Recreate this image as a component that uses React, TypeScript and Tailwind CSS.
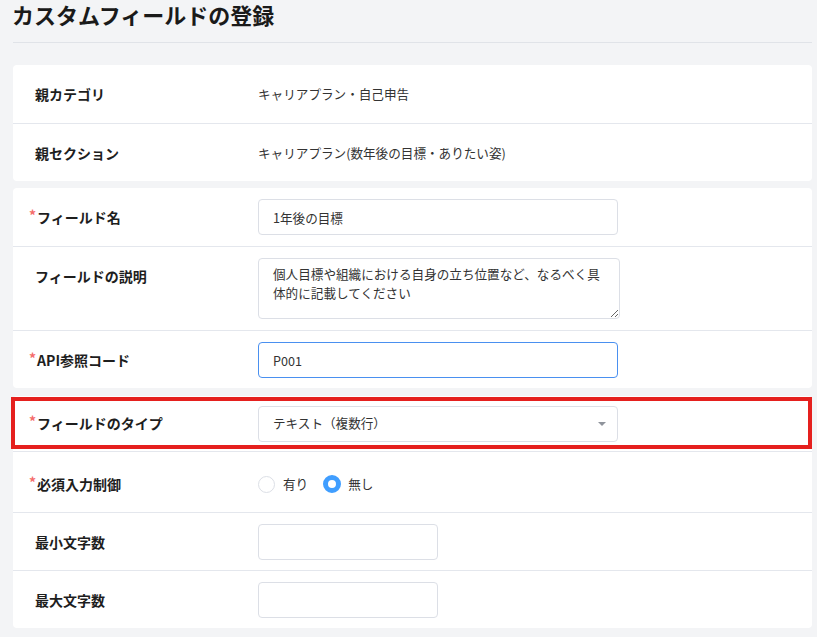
import React from "react";

const font = { fontFamily: '"Noto Sans CJK JP", "Noto Sans", sans-serif' };

function Label({ text, required }: { text: string; required?: boolean }) {
  return (
    <div className="w-[245px] shrink-0 h-9 flex items-center">
      {required ? (
        <span className="pl-[16px] flex items-center text-[14px] font-bold text-[#1e1e1e]">
          <span className="text-[#f56c6c] text-[14px] leading-[14px] font-bold -mt-[5px] mr-[1px]">*</span>
          {text}
        </span>
      ) : (
        <span className="pl-[22px] text-[14px] font-bold text-[#1e1e1e]">{text}</span>
      )}
    </div>
  );
}

function Row({ children, first }: { children: React.ReactNode; first?: boolean }) {
  return (
    <div
      className={
        "flex items-start " + (first ? "py-[11px]" : "pt-[11px] pb-[10px] border-t border-[#e4e7ed]")
      }
    >
      {children}
    </div>
  );
}

function TextInput({ value, width, focused }: { value: string; width: string; focused?: boolean }) {
  return (
    <input
      readOnly
      value={value}
      className={
        "h-9 rounded-[4px] border bg-white px-[14px] text-[12.6px] text-[#333] outline-none " +
        width +
        (focused ? " border-[#4a90f0]" : " border-[#dcdfe6]")
      }
      style={font}
    />
  );
}

export default function App() {
  return (
    <div className="min-h-[637px] bg-[#f3f4f6] pl-[13px] pr-[5px]" style={font}>
      <div className="h-[43px] border-b border-[#e0e3e8]">
        <h1 className="text-[22px] leading-[28px] font-bold text-[#1a1a1a] -ml-[1px]">カスタムフィールドの登録</h1>
      </div>

      <div className="mt-[22px] bg-white rounded-[4px]">
        <Row first>
          <Label text="親カテゴリ" />
          <div className="h-9 flex items-center text-[12.6px] text-[#333]">キャリアプラン・自己申告</div>
        </Row>
        <Row>
          <Label text="親セクション" />
          <div className="h-9 flex items-center text-[12.6px] text-[#333]">キャリアプラン(数年後の目標・ありたい姿)</div>
        </Row>
      </div>

      <div className="mt-[7px] bg-white rounded-[4px]">
        <Row first>
          <Label text="フィールド名" required />
          <TextInput value="1年後の目標" width="w-[360px]" />
        </Row>
        <div className="flex items-start pt-[11px] pb-[11px] border-t border-[#e4e7ed]">
          <Label text="フィールドの説明" />
          <textarea
            readOnly
            defaultValue="個人目標や組織における自身の立ち位置など、なるべく具体的に記載してください"
            className="w-[362px] h-[61px] rounded-[4px] border border-[#dcdfe6] bg-white pl-[14px] pr-[8px] py-[5px] text-[12.6px] leading-[19px] text-[#333] outline-none"
            style={font}
          />
        </div>
        <Row>
          <Label text="API参照コード" required />
          <TextInput value="P001" width="w-[360px]" focused />
        </Row>
      </div>

      <div className="mt-[8px] bg-white rounded-[4px]">
        <div className="relative h-[55px] flex items-center">
          <Label text="フィールドのタイプ" required />
          <div className="relative w-[360px] h-9 rounded-[4px] border border-[#dcdfe6] bg-white flex items-center px-[14px] text-[12.6px] text-[#333]">
            テキスト（複数行）
            <svg className="absolute right-[11px] top-[15px]" width="8" height="4" viewBox="0 0 8 4">
              <path d="M0 0 L8 0 L4 4 Z" fill="#8f949c" />
            </svg>
          </div>
          <div className="absolute -left-[2px] right-0 top-[1px] bottom-[2px] border-[4px] border-[#e5201e] pointer-events-none" />
        </div>
        <div className="flex items-start pt-[14px] pb-[10px] border-t border-[#e4e7ed]">
          <Label text="必須入力制御" required />
          <div className="h-9 flex items-center text-[12.6px] text-[#333]">
            <span className="w-[17px] h-[17px] rounded-full border border-[#dcdfe6] bg-white" />
            <span className="ml-[8px]">有り</span>
            <span className="ml-[15px] w-[18px] h-[18px] rounded-full border-[5px] border-[#409eff] bg-white" />
            <span className="ml-[7px]">無し</span>
          </div>
        </div>
        <Row>
          <Label text="最小文字数" />
          <TextInput value="" width="w-[180px]" />
        </Row>
        <Row>
          <Label text="最大文字数" />
          <TextInput value="" width="w-[180px]" />
        </Row>
      </div>
      <div className="h-[8px]" />
    </div>
  );
}
